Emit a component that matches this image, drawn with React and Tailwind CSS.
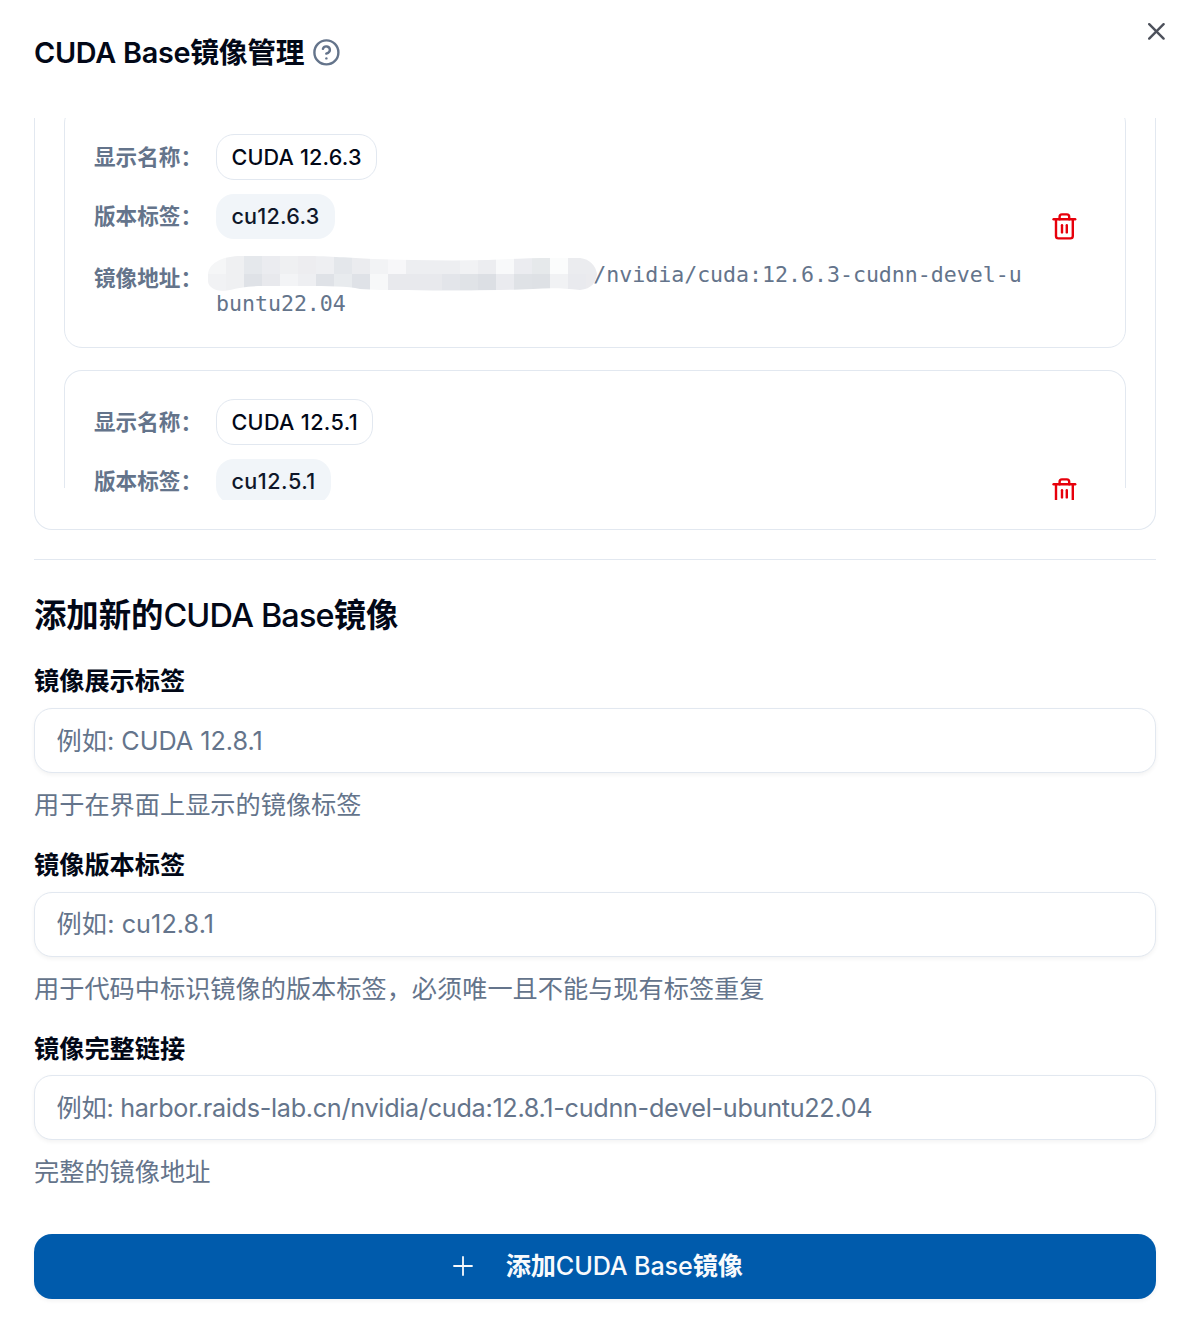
import React from "react";
import { X, CircleHelp, Trash2 } from "lucide-react";

const MOSAIC_TOP = [
  "#f5f6f7", "#eff0f2", "#e5e8ec", "#ebecf0", "#eff0f2", "#ededf0", "#eeeff2", "#e4e7eb", "#ebecef", "#f2f3f5", "#f7f7f9",
  "#edeef1", "#edeef1", "#edeef1", "#f1f2f4", "#ecedf0", "#f8f9fa", "#ebecf0", "#e6e9eb", "#fbfcfc", "#ebecef", "#ebecef",
];
const MOSAIC_BOTTOM = [
  "#f1f2f4", "#eff0f2", "#dfe2e7", "#e8e9ed", "#f3f4f6", "#eeeff2", "#dfe2e7", "#e8ebee", "#dfe2e7", "#f7f8f9", "#e8e9ed",
  "#e8e9ed", "#e8e9ed", "#e3e5ea", "#e0e3e7", "#dcdfe4", "#eaebef", "#dfe2e6", "#dee1e5", "#f1f2f4", "#e9eaee", "#ebebee",
];

/* Pixelated strip that hides the registry host. */
function Mosaic() {
  return (
    <svg className="absolute -left-[8px] -top-[5px]" width="389" height="37" viewBox="0 0 389 37" aria-hidden="true">
      <defs>
        <clipPath id="strip">
          <path d="M0 18C1 8 12 1 30 0H95C125 0 140 2 165 3C200 4 240 5 280 4C300 3 320 2 345 2H372C382 3 388 10 389 18C388 26 384 33 372 34C355 32 340 32 325 33C300 34 280 34 262 35C235 35 215 35 200 34C180 34 165 34 152 33C140 30 120 30 95 30H55C40 30 30 32 22 34C10 37 0 32 0 25Z" />
        </clipPath>
      </defs>
      <g clipPath="url(#strip)" shapeRendering="crispEdges">
        {MOSAIC_TOP.map((c, i) => (
          <rect key={i} x={i * 18} y="0" width="18" height="18" fill={c} />
        ))}
        {MOSAIC_BOTTOM.map((c, i) => (
          <rect key={i} x={i * 18} y="18" width="18" height="16" fill={c} />
        ))}
        <rect x="0" y="34" width="389" height="3" fill="#f3f4f6" />
      </g>
    </svg>
  );
}

function FieldName({ children }) {
  return <span className="block w-[122px] shrink-0 font-semibold">{children}</span>;
}

function ImageRows({ name, tag, spacing, children }) {
  return (
    <div className="flex-1 text-[21.6px] leading-[28.8px] text-[#64748b]">
      <div className="flex h-[46px] items-center">
        <FieldName>显示名称：</FieldName>
        <span className={`flex h-[46px] items-center rounded-[18px] border border-[#e2e8f0] px-[14.4px] font-medium text-[#020817] ${spacing.name}`}>
          {name}
        </span>
      </div>
      <div className="mt-[14px] flex h-[45px] items-center">
        <FieldName>版本标签：</FieldName>
        <span className={`flex h-[45px] items-center rounded-[18px] bg-[#f1f5f9] px-[15.4px] font-medium text-[#0f172a] ${spacing.tag}`}>
          {tag}
        </span>
      </div>
      {children}
    </div>
  );
}

function DeleteButton({ className }) {
  return (
    <button className={className} aria-label="删除">
      <Trash2 size={28.8} strokeWidth={2} color="#e7000b" />
    </button>
  );
}

function Field({ label, placeholder, hint, inputClass = "", labelClass = "leading-[26px]" }) {
  return (
    <div className="text-[25.2px]">
      <label className={`block h-[25.2px] font-semibold text-[#020817] ${labelClass}`}>{label}</label>
      <input
        className={`mt-[14.4px] block h-[64.8px] w-full rounded-[18px] border border-[#e2e8f0] bg-white px-[21.6px] shadow-[0_2px_4px_rgba(0,0,0,0.05)] outline-none placeholder:text-[#64748b] placeholder:opacity-100 ${inputClass}`}
        placeholder={placeholder}
      />
      <p className="mt-[14.4px] leading-[36px] text-[#64748b]">{hint}</p>
    </div>
  );
}

export default function App() {
  return (
    <div className="relative h-[1320px] w-[1180px] overflow-hidden bg-white pl-[34px] pr-[24px] font-['Inter','Noto_Sans_CJK_SC',sans-serif] text-[#020817]">
      <button className="absolute right-[9px] top-[17px] opacity-70" aria-label="关闭">
        <X size={28.8} strokeWidth={2} />
      </button>

      <header className="flex h-[118px] items-start gap-[7.5px] pt-[38px]">
        <h2 className="text-[28.8px] font-semibold leading-[29px] tracking-[-0.27px]">CUDA Base镜像管理</h2>
        <CircleHelp size={28.8} strokeWidth={2} color="#64748b" />
      </header>

      <section className="h-[412px] rounded-b-[18px] border-x border-b border-[#e2e8f0] px-[29px]">
        <div className="h-[382px] overflow-hidden">
          <div className="-mt-[13px] flex h-[243px] items-start rounded-[18px] border border-[#e2e8f0] px-[29px] pt-[28px]">
            <ImageRows name="CUDA 12.6.3" tag="cu12.6.3" spacing={{ name: "tracking-[0.18px]", tag: "tracking-[0.25px]" }}>
              <div className="mt-[22px] flex items-start">
                <div className="pt-[3px]">
                  <FieldName>镜像地址：</FieldName>
                </div>
                <div className="relative w-[836px] font-['DejaVu_Sans_Mono',monospace] tracking-[-0.02px]">
                  <Mosaic />
                  <div className="whitespace-nowrap pl-[377.3px]">/nvidia/cuda:12.6.3-cudnn-devel-u</div>
                  <div>buntu22.04</div>
                </div>
              </div>
            </ImageRows>
            <DeleteButton className="-ml-[46px] mr-[17px] mt-[78px]" />
          </div>

          <div className="mt-[22px] flex h-[118px] items-start rounded-t-[18px] border-x border-t border-[#e2e8f0] px-[29px] pt-[28px]">
            <ImageRows name="CUDA 12.5.1" tag="cu12.5.1" spacing={{ name: "tracking-[0.36px]", tag: "tracking-[0.5px]" }} />
            <DeleteButton className="-ml-[46px] mr-[17px] mt-[78px]" />
          </div>
        </div>
      </section>

      <hr className="mt-[29px] border-t border-[#e2e8f0]" />

      <section className="mt-[29.4px]">
        <h3 className="h-[50.4px] text-[32.4px] font-medium leading-[53px] tracking-[-0.8px]">
          <span className="font-semibold tracking-[-0.05px]">添加新的</span>CUDA Base<span className="font-semibold tracking-[-0.3px]">镜像</span>
        </h3>
        <div className="mt-[28.8px] flex flex-col gap-[28.8px]">
          <Field label="镜像展示标签" placeholder="例如: CUDA 12.8.1" hint="用于在界面上显示的镜像标签" labelClass="leading-[25.2px]" />
          <Field label="镜像版本标签" placeholder="例如: cu12.8.1" hint="用于代码中标识镜像的版本标签，必须唯一且不能与现有标签重复" inputClass="tracking-[0.08px]" />
          <Field
            label="镜像完整链接"
            placeholder="例如: harbor.raids-lab.cn/nvidia/cuda:12.8.1-cudnn-devel-ubuntu22.04"
            hint="完整的镜像地址"
            inputClass="tracking-[-0.29px]"
          />
        </div>
        <button className="mt-[43.4px] flex h-[65px] w-full items-center justify-center rounded-[18px] bg-[#005bac] pl-[5px] pt-px text-[25.2px] font-medium tracking-[-0.15px] text-[#f8fafc] shadow-[0_2px_4px_rgba(0,0,0,0.05)]">
          <svg className="mb-px mr-[31.5px]" width="22" height="22" viewBox="0 0 22 22" fill="none" stroke="currentColor" strokeWidth="1.8" strokeLinecap="round" aria-hidden="true">
            <path d="M11 2v18M2 11h18" />
          </svg>
          <span>
            <span className="font-semibold">添加</span>CUDA Base<span className="font-semibold">镜像</span>
          </span>
        </button>
      </section>
    </div>
  );
}
